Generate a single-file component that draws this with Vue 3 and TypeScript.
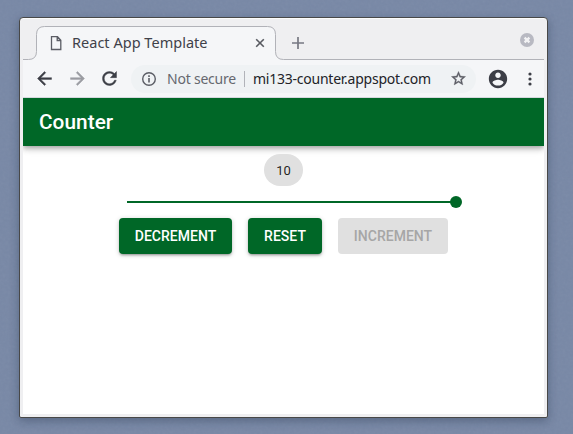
<script setup lang="ts">
import { computed, ref } from 'vue'

const min = 0
const max = 10
const count = ref<number>(10)
const percent = computed(() => ((count.value - min) / (max - min)) * 100)
const decrement = () => { if (count.value > min) count.value-- }
const increment = () => { if (count.value < max) count.value++ }
const reset = () => { count.value = min }
</script>

<template>
  <div class="desktop">
    <svg class="grain" width="573" height="434" aria-hidden="true">
      <filter id="grain">
        <feTurbulence type="fractalNoise" baseFrequency="0.35" numOctaves="2" seed="4" />
        <feColorMatrix type="saturate" values="0" />
      </filter>
      <rect width="573" height="434" filter="url(#grain)" />
    </svg>
    <div class="window">
      <div class="tabstrip">
        <svg class="tab-outline" width="521" height="42" viewBox="0 0 521 42" aria-hidden="true">
          <path d="M-1 41.500H5.500Q13.500 41.500 13.500 33.500V16.500Q13.500 8.500 21.500 8.500H244.500Q252.500 8.500 252.500 16.500V33.500Q252.500 41.500 260.500 41.500H522V43H-1Z" fill="#f5f6f8" stroke="#b1b2b8" />
        </svg>
        <div class="tab">
          <svg class="page-icon" width="12" height="15" viewBox="0 0 12 15"><path d="M1.500 .7H7.500L10.800 4.200V13.500H1.500ZM7.200 .7V4.500H10.800" fill="none" stroke="#5b5d65" stroke-width="1.300" /></svg>
          <span class="tab-title">React App Template</span>
          <svg class="tab-close" width="10" height="10" viewBox="0 0 10 10"><path d="M1.200 1.200L8.800 8.800M8.800 1.200L1.200 8.800" stroke="#585a61" stroke-width="1.600" /></svg>
        </div>
        <svg class="new-tab" width="12" height="12" viewBox="0 0 12 12"><path d="M6 0V12M0 6H12" stroke="#777882" stroke-width="1.700" /></svg>
        <svg class="win-close" width="14" height="14" viewBox="0 0 14 14"><circle cx="7" cy="7" r="7" fill="#b8b9c2" /><path d="M4.600 4.600L9.400 9.400M9.400 4.600L4.600 9.400" stroke="#f3f3f5" stroke-width="2.300" /></svg>
      </div>

      <div class="toolbar">
        <svg class="back" width="21" height="21" viewBox="0 0 24 24"><path d="M20 11H7.830l5.590-5.590L12 4l-8 8 8 8 1.410-1.410L7.830 13H20v-2z" fill="#3c3e46" stroke="#3c3e46" stroke-width=".5" /></svg>
        <svg class="forward" width="21" height="21" viewBox="0 0 24 24"><path d="M12 4l-1.410 1.410L16.170 11H4v2h12.170l-5.580 5.590L12 20l8-8z" fill="#9b9ca2" stroke="#9b9ca2" stroke-width=".5" /></svg>
        <svg class="reload" width="21" height="21" viewBox="0 0 24 24"><path d="M17.650 6.350C16.200 4.900 14.210 4 12 4c-4.420 0-7.990 3.580-7.990 8s3.570 8 7.990 8c3.730 0 6.840-2.550 7.730-6h-2.080c-.82 2.330-3.040 4-5.650 4-3.310 0-6-2.690-6-6s2.690-6 6-6c1.660 0 3.140.69 4.220 1.780L13 11h7V4l-2.350 2.350z" fill="#3c3e46" stroke="#3c3e46" stroke-width=".5" /></svg>
        <div class="omnibox">
          <svg class="info" width="16" height="16" viewBox="0 0 16 16"><circle cx="8" cy="8" r="6.300" fill="none" stroke="#5b5d65" stroke-width="1.400" /><path d="M8 7V11.600M8 4.300V6" stroke="#5b5d65" stroke-width="1.600" /></svg>
          <span class="insecure">Not secure</span>
          <span class="divider"></span>
          <span class="url">mi133-counter.appspot.com</span>
          <svg class="star" width="17" height="17" viewBox="0 0 24 24"><path d="M22 9.240l-7.190-.62L12 2 9.190 8.630 2 9.240l5.460 4.730L5.820 21 12 17.270 18.180 21l-1.630-7.030L22 9.240zM12 15.400l-3.760 2.270 1-4.280-3.320-2.880 4.380-.38L12 6.100l1.710 4.040 4.380.38-3.320 2.880 1 4.280L12 15.400z" fill="#5b5d65" stroke="#5b5d65" stroke-width=".5" /></svg>
        </div>
        <svg class="account" width="22" height="22" viewBox="0 0 24 24"><path d="M12 2C6.480 2 2 6.480 2 12s4.480 10 10 10 10-4.480 10-10S17.520 2 12 2zm0 3c1.660 0 3 1.340 3 3s-1.340 3-3 3-3-1.340-3-3 1.340-3 3-3zm0 14.200c-2.500 0-4.710-1.280-6-3.220.03-1.990 4-3.080 6-3.080 1.990 0 5.970 1.090 6 3.080-1.290 1.940-3.500 3.220-6 3.220z" fill="#3c3e46" /></svg>
        <svg class="menu" width="4" height="14" viewBox="0 0 4 14"><circle cx="2" cy="2" r="1.600" /><circle cx="2" cy="7" r="1.600" /><circle cx="2" cy="12" r="1.600" /></svg>
      </div>

      <div class="page">
        <header class="appbar">Counter</header>
        <main class="content">
          <div class="chip">{{ count }}</div>
          <div class="slider">
            <div class="rail"></div>
            <div class="track" :style="{ width: percent + '%' }"></div>
            <div class="thumb" :style="{ left: percent + '%' }"></div>
          </div>
          <div class="actions">
            <button class="btn dec" :disabled="count <= min" @click="decrement">DECREMENT</button>
            <button class="btn res" @click="reset">RESET</button>
            <button class="btn inc" :disabled="count >= max" @click="increment">INCREMENT</button>
          </div>
        </main>
      </div>
    </div>
  </div>
</template>

<style>
html, body { margin: 0; overflow: hidden; }
</style>

<style scoped>
* { box-sizing: border-box; }
svg { display: block; flex: none; }
.desktop {
  position: relative;
  width: 573px;
  height: 434px;
  padding: 17px 25px 16px 19px;
  background: #7888a6;
  overflow: hidden;
}
.grain { position: absolute; left: 0; top: 0; opacity: .06; }
.window {
  position: relative;
  display: flex;
  flex-direction: column;
  width: 529px;
  height: 401px;
  padding: 0 3px 3px;
  border: 1px solid #484848;
  border-radius: 4px 4px 2px 2px;
  background: #efeff1;
  box-shadow: 0 3px 10px rgba(20, 30, 55, .32), inset 0 1px #fbfbfb;
}
.tabstrip {
  position: relative;
  display: flex;
  align-items: center;
  height: 42px;
  flex: none;
}
.tab-outline { position: absolute; left: 0; top: 0; }
.tab {
  position: relative;
  display: flex;
  align-items: center;
  width: 239px;
  height: 33px;
  margin: 7px 0 0 14px;
  padding: 0 10px 0 13px;
  font: 14.500px/20px "Noto Sans", "Open Sans", sans-serif;
  color: #3f4149;
}
.page-icon { margin-top: 2px; }
.tab-title { width: 135px; margin-left: 10px; padding-bottom: 1px; white-space: nowrap; letter-spacing: .02px; }
.tab-close { margin-left: auto; margin-right: 1px; }
.new-tab { position: relative; margin: 8px 0 0 16px; }
.win-close { margin: 2px 10px 0 auto; }
.toolbar {
  display: flex;
  align-items: center;
  flex: none;
  height: 38px;
  padding: 0 12px 0 11px;
  background: #f5f6f8;
  border-bottom: 1px solid #d5d8de;
}
.forward { margin-left: 12px; }
.reload { margin-left: 11px; }
.omnibox {
  display: flex;
  align-items: center;
  width: 345px;
  height: 28px;
  margin-left: 11px;
  padding: 0 9px 0 10px;
  border-radius: 14px;
  background: #eff2f4;
  font: 14px/20px "Noto Sans", "Open Sans", sans-serif;
  white-space: nowrap;
}
.insecure { width: 70px; margin-left: 10px; color: #66686f; letter-spacing: -.22px; }
.divider { width: 1px; height: 16px; margin: 0 8px 0 7px; background: #b1b3b9; }
.url { color: #222328; width: 178px; letter-spacing: -.24px; }
.star { margin-left: auto; }
.account { margin-left: 11px; }
.menu { margin-left: 19.500px; fill: #3c3e46; }
.page {
  flex: 1;
  background: #fff;
  overflow: hidden;
  font-family: Roboto, sans-serif;
}
.appbar {
  height: 48px;
  padding: 0 16px;
  background: #006727;
  color: #fff;
  font-size: 20.800px;
  font-weight: 500;
  line-height: 48px;
  letter-spacing: .04px;
  box-shadow: 0 2px 4px -1px rgba(0, 0, 0, .2), 0 4px 5px rgba(0, 0, 0, .14), 0 1px 10px rgba(0, 0, 0, .12);
}
.content {
  display: flex;
  flex-direction: column;
  align-items: center;
  padding-top: 8px;
}
.chip {
  height: 32px;
  padding: 0 12px;
  border-radius: 16px;
  background: #e0e0e0;
  color: rgba(0, 0, 0, .87);
  font-size: 13px;
  line-height: 33px;
}
.slider {
  position: relative;
  width: 329px;
  height: 2px;
  margin: 15px 0;
  transform: translateX(8px);
}
.rail, .track { position: absolute; left: 0; top: 0; height: 2px; background: #006727; }
.rail { width: 100%; opacity: .24; }
.thumb {
  position: absolute;
  top: -5px;
  width: 12px;
  height: 12px;
  margin-left: -6px;
  border-radius: 50%;
  background: #006727;
}
.actions { display: flex; gap: 16px; }
.btn {
  height: 36px;
  padding: 0;
  border: 0;
  border-radius: 4px;
  background: #006727;
  color: #fff;
  font: 500 14px/24px Roboto, sans-serif;
  letter-spacing: .02px;
  box-shadow: 0 1px 5px rgba(0, 0, 0, .2), 0 2px 2px rgba(0, 0, 0, .14), 0 3px 1px -2px rgba(0, 0, 0, .12);
}
.btn:disabled { background: #e0e0e0; color: #a6a6a6; box-shadow: none; }
.dec { width: 113px; }
.res { width: 74px; }
.inc { width: 110px; }
</style>
